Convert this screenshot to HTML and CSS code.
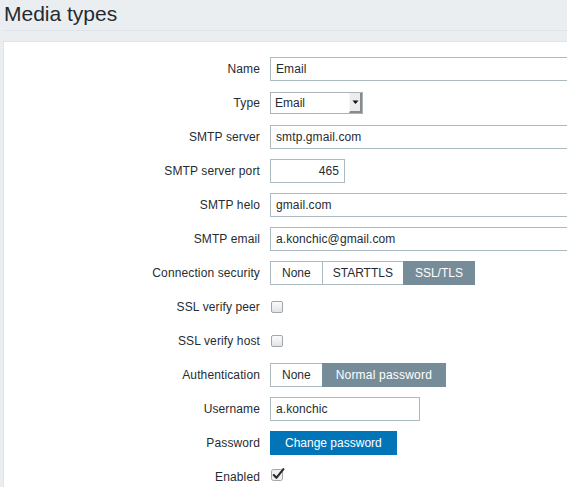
FILE: index.html
```html
<!DOCTYPE html>
<html>
<head>
<meta charset="utf-8">
<link rel="stylesheet" href="styles.css">
</head>
<body>
<header class="page-header"><h1>Media types</h1></header>
<main class="panel">
  <ul class="form">
    <li class="row"><span class="lbl">Name</span><div class="field"><div class="text wide">Email</div></div></li>
    <li class="row"><span class="lbl">Type</span><div class="field"><div class="select"><span class="sel-val">Email</span><span class="sel-btn"><svg width="7" height="5" viewBox="0 0 7 5"><path d="M0.5 0.5h6l-3 3.5z" fill="#111"/></svg></span></div></div></li>
    <li class="row"><span class="lbl">SMTP server</span><div class="field"><div class="text wide">smtp.gmail.com</div></div></li>
    <li class="row"><span class="lbl">SMTP server port</span><div class="field"><div class="text port">465</div></div></li>
    <li class="row"><span class="lbl">SMTP helo</span><div class="field"><div class="text wide">gmail.com</div></div></li>
    <li class="row"><span class="lbl">SMTP email</span><div class="field"><div class="text wide">a.konchic@gmail.com</div></div></li>
    <li class="row"><span class="lbl">Connection security</span><div class="field"><div class="seg"><span>None</span><span class="narrow">STARTTLS</span><span class="on">SSL/TLS</span></div></div></li>
    <li class="row"><span class="lbl">SSL verify peer</span><div class="field"><span class="cb"></span></div></li>
    <li class="row"><span class="lbl">SSL verify host</span><div class="field"><span class="cb"></span></div></li>
    <li class="row"><span class="lbl">Authentication</span><div class="field"><div class="seg"><span>None</span><span class="on roomy">Normal password</span></div></div></li>
    <li class="row"><span class="lbl">Username</span><div class="field"><div class="text user">a.konchic</div></div></li>
    <li class="row"><span class="lbl">Password</span><div class="field"><span class="btn">Change password</span></div></li>
    <li class="row"><span class="lbl">Enabled</span><div class="field"><svg class="cb-checked" width="16" height="18" viewBox="0 0 16 18"><rect x="1.5" y="1.5" width="11" height="11" rx="2" fill="#f0f0f0" stroke="#9ea7ab"/><path d="M3.8 7 L6.4 9.8 L13.4 1.2" fill="none" stroke="#2a2a2a" stroke-width="2.1" stroke-linecap="round" stroke-linejoin="round"/></svg></div></li>
  </ul>
</main>
</body>
</html>
```
FILE: styles.css
```css
html, body {
  margin: 0;
  padding: 0;
  background: #ebeef0;
  font-family: "Liberation Sans", Arial, sans-serif;
  font-size: 12px;
  color: #1f2c33;
  overflow: hidden;
  height: 100%;
}

.page-header {
  margin: 0 0 0 3px;
  padding-top: 2px;
  height: 28px;
  border-bottom: 1px solid #dde3e6;
}

.page-header h1 {
  margin: 0 0 0 1px;
  font-size: 21px;
  font-weight: normal;
  line-height: 24px;
  color: #1f2c33;
}

.panel {
  margin: 10px 0 0 3px;
  background: #fff;
  border: 1px solid #dfe4e7;
  border-right: none;
  height: 500px;
}

.form {
  list-style: none;
  margin: 0;
  padding: 10px 0;
}

.row {
  display: grid;
  grid-template-columns: 256px 1fr;
  column-gap: 10px;
  align-items: center;
  padding: 5px 0;
  min-height: 24px;
}

.lbl {
  text-align: right;
  line-height: 24px;
  white-space: nowrap;
  letter-spacing: 0.12px;
}

.field {
  display: flex;
  align-items: center;
  min-width: 0;
}

.text {
  box-sizing: border-box;
  height: 24px;
  line-height: 22px;
  border: 1px solid #acbbc2;
  padding: 0 5px;
  background: #fff;
  white-space: nowrap;
  flex: none;
  letter-spacing: 0.1px;
}

.wide { width: 453px; }
.port { width: 75px; text-align: right; }
.user { width: 150px; }

.select {
  box-sizing: border-box;
  width: 93px;
  height: 22px;
  border: 1px solid #a9b4b9;
  background: #fff;
  display: flex;
  flex: none;
}

.sel-val {
  flex: 1;
  line-height: 20px;
  padding-left: 4px;
}

.sel-btn {
  box-sizing: border-box;
  width: 13px;
  height: 20px;
  background: #ececec;
  border-left: 1px solid #f8f8f8;
  border-right: 2px solid #8a8a8a;
  border-bottom: 2px solid #8a8a8a;
  display: flex;
  align-items: center;
  justify-content: center;
  padding-top: 1px;
}

.seg {
  display: flex;
}

.seg span {
  box-sizing: border-box;
  height: 24px;
  line-height: 22px;
  padding: 0 11px;
  border: 1px solid #acbbc2;
  background: #fff;
  white-space: nowrap;
}

.seg span + span {
  margin-left: -1px;
}

.seg span.narrow {
  padding: 0 10px;
}

.seg span.on {
  background: #768d99;
  border-color: #768d99;
  color: #fff;
}

.seg span.roomy {
  padding: 0 13px;
  letter-spacing: 0.2px;
}

.cb {
  box-sizing: border-box;
  display: block;
  width: 12px;
  height: 12px;
  margin-left: 1px;
  border: 1px solid #9ea7ab;
  border-radius: 2px;
  background: linear-gradient(#fbfbfb, #e4e4e4);
}

.btn {
  box-sizing: border-box;
  height: 24px;
  line-height: 22px;
  padding: 0 14px;
  border: 1px solid #0275b8;
  background: #0275b8;
  color: #fff;
  white-space: nowrap;
}

.cb-checked {
  display: block;
}
```
